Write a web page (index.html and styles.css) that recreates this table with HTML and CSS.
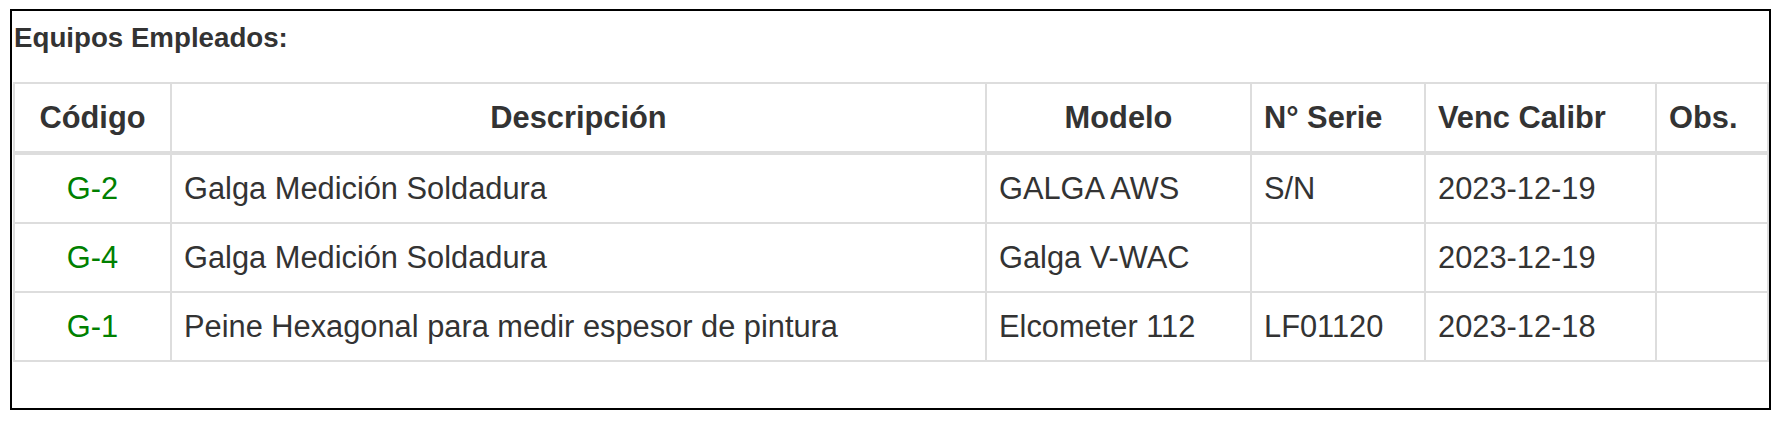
FILE: index.html
```html
<!DOCTYPE html>
<html lang="es">
<head>
<meta charset="utf-8">
<title>Equipos Empleados</title>
<link rel="stylesheet" href="styles.css">
</head>
<body>
<div class="panel">
  <div class="panel-title">Equipos Empleados:</div>
  <table class="equipos">
    <thead>
      <tr>
        <th class="c-code center">Código</th>
        <th class="c-desc center">Descripción</th>
        <th class="c-model center">Modelo</th>
        <th class="c-serie">N° Serie</th>
        <th class="c-venc">Venc Calibr</th>
        <th class="c-obs">Obs.</th>
      </tr>
    </thead>
    <tbody>
      <tr>
        <td class="center code">G-2</td>
        <td>Galga Medición Soldadura</td>
        <td>GALGA AWS</td>
        <td>S/N</td>
        <td>2023-12-19</td>
        <td></td>
      </tr>
      <tr>
        <td class="center code">G-4</td>
        <td>Galga Medición Soldadura</td>
        <td>Galga V-WAC</td>
        <td></td>
        <td>2023-12-19</td>
        <td></td>
      </tr>
      <tr>
        <td class="center code">G-1</td>
        <td>Peine Hexagonal para medir espesor de pintura</td>
        <td>Elcometer 112</td>
        <td>LF01120</td>
        <td>2023-12-18</td>
        <td></td>
      </tr>
    </tbody>
  </table>
</div>
</body>
</html>
```

FILE: styles.css
```css
html, body {
  background: #ffffff;
}
body {
  margin: 9px 8px 0 10px;
  font-family: "Liberation Sans", Arial, sans-serif;
  color: #333333;
}
.panel {
  border: 2px solid #000000;
  padding: 11px 0 46px 1px;
}
.panel-title {
  font-size: 27.7px;
  line-height: 31px;
  font-weight: bold;
  padding-left: 1px;
  margin-bottom: 29px;
}
.equipos {
  width: 1756px;
  table-layout: fixed;
  border-collapse: separate;
  border-spacing: 0;
  border-top: 2px solid #dddddd;
  border-left: 2px solid #dddddd;
  font-size: 30.8px;
}
.equipos th,
.equipos td {
  box-sizing: border-box;
  border-right: 2px solid #dddddd;
  border-bottom: 2px solid #dddddd;
  padding: 12px 12px;
  line-height: 43px;
  text-align: left;
  vertical-align: middle;
  white-space: nowrap;
  overflow: hidden;
}
.equipos th {
  font-weight: bold;
  border-bottom-width: 4px;
}
.equipos .center {
  text-align: center;
}
.equipos .code {
  color: #008000;
}
.c-code { width: 157px; }
.c-desc { width: 815px; }
.c-model { width: 265px; }
.c-serie { width: 174px; }
.c-venc { width: 231px; }
.c-obs { width: 112px; }
```
